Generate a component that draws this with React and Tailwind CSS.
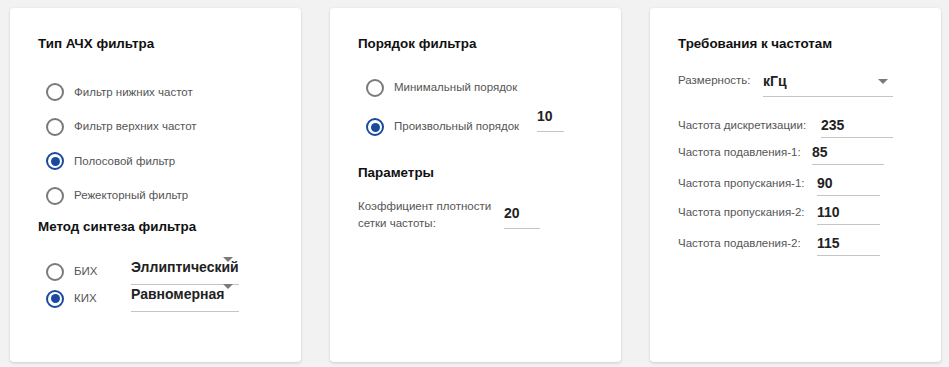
import React from 'react'

const font = { fontFamily: '"Liberation Sans", Arial, sans-serif' }

function Radio({ checked }) {
  return (
    <span
      className={`w-[18px] h-[18px] rounded-full border-2 flex items-center justify-center shrink-0 ${
        checked ? 'border-[#1a4a9f]' : 'border-[#7a7a7a]'
      }`}
    >
      {checked && <span className="w-[9px] h-[9px] rounded-full bg-[#1a4a9f]" />}
    </span>
  )
}

function RadioRow({ checked, label, className = '' }) {
  return (
    <div className={`flex items-center pl-[8px] ${className}`}>
      <Radio checked={checked} />
      <span className="ml-[10px] text-[11.5px] text-[#555] whitespace-nowrap">{label}</span>
    </div>
  )
}

function Caret({ className = '' }) {
  return (
    <span
      className={`absolute w-0 h-0 border-l-[5px] border-r-[5px] border-t-[5px] border-l-transparent border-r-transparent border-t-[#7a7a7a] ${className}`}
    />
  )
}

function Value({ value, className = '' }) {
  return (
    <div className={`border-b border-[#c4c4c4] text-[14px] font-bold text-[#222] flex items-center ${className}`}>
      {value}
    </div>
  )
}

function Card({ children }) {
  return (
    <div className="w-[291px] h-[354px] bg-white rounded-[4px] shadow-[0_1px_3px_rgba(0,0,0,0.16)] pt-[28px] px-[28px]">
      {children}
    </div>
  )
}

function Title({ children, className = '' }) {
  return <h3 className={`text-[13.4px] leading-[16px] font-bold text-[#111] ${className}`}>{children}</h3>
}

export default function App() {
  const freqs = [
    { label: 'Частота дискретизации:', w: 'w-[143px]', val: '235', iw: 'w-[72px]', mt: 'mt-[17px]' },
    { label: 'Частота подавления-1:', w: 'w-[134px]', val: '85', iw: 'w-[72px]', mt: 'mt-[3px]' },
    { label: 'Частота пропускания-1:', w: 'w-[139px]', val: '90', iw: 'w-[63px]', mt: 'mt-[7px]' },
    { label: 'Частота пропускания-2:', w: 'w-[139px]', val: '110', iw: 'w-[63px]', mt: 'mt-[5px]' },
    { label: 'Частота подавления-2:', w: 'w-[139px]', val: '115', iw: 'w-[63px]', mt: 'mt-[7px]' },
  ]

  return (
    <div style={font} className="w-[949px] h-[367px] bg-[#f2f2f2] flex gap-[29px] pl-[10px] pt-[8px]">
      {/* Тип АЧХ / метод синтеза */}
      <Card>
        <Title>Тип АЧХ фильтра</Title>
        <div className="mt-[23px]">
          {['Фильтр нижних частот', 'Фильтр верхних частот', 'Полосовой фильтр', 'Режекторный фильтр'].map((l, i) => (
            <RadioRow key={l} label={l} checked={i === 2} className="h-[34.5px]" />
          ))}
        </div>
        <Title className="mt-[6px]">Метод синтеза фильтра</Title>
        <div className="flex mt-[23px]">
          <div className="w-[93px]">
            <RadioRow label="БИХ" className="h-[27px]" />
            <RadioRow label="КИХ" checked className="h-[27px]" />
          </div>
          <div className="w-[108px]">
            <div className="relative h-[27px] border-b border-[#c4c4c4] flex items-center text-[14px] font-bold text-[#222] pb-[7px] whitespace-nowrap">
              Эллиптический
              <Caret className="right-[6px] top-[-1px]" />
            </div>
            <div className="relative h-[27px] border-b border-[#c4c4c4] flex items-center text-[14px] font-bold text-[#222] pb-[7px] whitespace-nowrap">
              Равномерная
              <Caret className="right-[6px] top-[-1px]" />
            </div>
          </div>
        </div>
      </Card>

      {/* Порядок / параметры */}
      <Card>
        <Title>Порядок фильтра</Title>
        <RadioRow label="Минимальный порядок" className="h-[34px] mt-[19px]" />
        <div className="flex items-center h-[34px] mt-[5px]">
          <RadioRow label="Произвольный порядок" checked />
          <Value value="10" className="ml-[18px] w-[27px] h-[30px] mb-[20px]" />
        </div>
        <Title className="mt-[21px]">Параметры</Title>
        <div className="flex items-start mt-[17px]">
          <div className="w-[146px] text-[11.5px] leading-[17px] text-[#555]">
            Коэффициент плотности
            <br />
            сетки частоты:
          </div>
          <Value value="20" className="w-[36px] h-[30px] mt-[1px]" />
        </div>
      </Card>

      {/* Требования к частотам */}
      <Card>
        <Title>Требования к частотам</Title>
        <div className="flex items-center mt-[15px]">
          <span className="w-[85px] text-[11.5px] text-[#555] self-start mt-[5px]">Размерность:</span>
          <div className="relative w-[130px] h-[30px] border-b border-[#c4c4c4] flex items-center text-[14px] font-bold text-[#222]">
            кГц
            <Caret className="right-[5px] top-[12px]" />
          </div>
        </div>
        {freqs.map((f) => (
          <div key={f.label} className={`flex items-center ${f.mt}`}>
            <span className={`${f.w} text-[11.5px] text-[#555] shrink-0 whitespace-nowrap`}>{f.label}</span>
            <Value value={f.val} className={`${f.iw} h-[24px]`} />
          </div>
        ))}
      </Card>
    </div>
  )
}
